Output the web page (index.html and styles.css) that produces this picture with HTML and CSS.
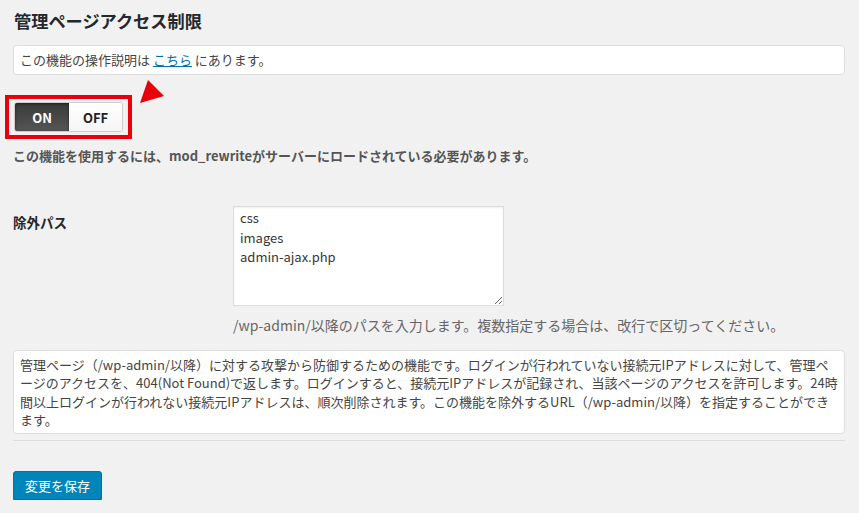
FILE: index.html
```html
<!DOCTYPE html>
<html lang="ja">
<head>
    <meta charset="UTF-8">
    <meta name="viewport" content="width=device-width, initial-scale=1.0">
    <title>管理ページアクセス制限</title>
    <link rel="stylesheet" href="styles.css">
</head>
<body>
    <div class="wrap">
        <h2 class="page-title">管理ページアクセス制限</h2>

        <div class="info-box">この機能の操作説明は <a href="#">こちら</a> にあります。</div>

        <div class="toggle-row">
            <div class="highlight">
                <div class="switch">
                    <span class="switch-on">ON</span>
                    <span class="switch-off">OFF</span>
                </div>
            </div>
            <svg class="pointer" width="26" height="25" viewBox="0 0 26 25">
                <polygon points="8,0 24,16 0,23" fill="#e8000b"/>
            </svg>
        </div>

        <p class="notice">この機能を使用するには、mod_rewriteがサーバーにロードされている必要があります。</p>

        <div class="field-row">
            <div class="field-label">除外パス</div>
            <div class="field-body">
                <textarea class="paths">css
images
admin-ajax.php</textarea>
                <p class="field-desc">/wp-admin/以降のパスを入力します。複数指定する場合は、改行で区切ってください。</p>
            </div>
        </div>

        <div class="desc-box">管理ページ（/wp-admin/以降）に対する攻撃から防御するための機能です。ログインが行われていない接続元IPアドレスに対して、管理ページのアクセスを、404(Not Found)で返します。ログインすると、接続元IPアドレスが記録され、当該ページのアクセスを許可します。24時間以上ログインが行われない接続元IPアドレスは、順次削除されます。この機能を除外するURL（/wp-admin/以降）を指定することができます。</div>

        <hr class="divider">

        <button class="save-btn">変更を保存</button>
    </div>
</body>
</html>
```

FILE: styles.css
```css
body {
    margin: 0;
    padding: 0;
    background: #f1f1f1;
    font-family: "Noto Sans CJK JP", "Noto Sans", sans-serif;
    font-size: 13px;
    color: #444;
}

.wrap {
    width: 832px;
    margin-left: 13px;
    padding-top: 9px;
}

.page-title {
    margin: 0;
    font-size: 17.2px;
    line-height: 23px;
    font-weight: bold;
    color: #23282d;
    padding-left: 1px;
}

.info-box {
    margin-top: 13px;
    background: #fff;
    border: 1px solid #ddd;
    border-radius: 4px;
    padding: 5px 6px;
    line-height: 18px;
    color: #444;
}

.info-box a {
    color: #0073aa;
    text-decoration: underline;
}

.toggle-row {
    position: relative;
    margin-top: 20px;
    height: 44px;
}

.highlight {
    display: inline-block;
    margin-left: -8px;
    border: 4px solid #e8000b;
    padding: 3px 5px;
}

.switch {
    display: flex;
    width: 107px;
    height: 28px;
    border: 1px solid #ccc;
    border-radius: 3px;
    overflow: hidden;
    font-weight: bold;
    font-size: 13px;
}

.switch-on,
.switch-off {
    display: flex;
    align-items: center;
    justify-content: center;
}

.switch-on {
    width: 54px;
    background: linear-gradient(#3a3a3a, #555);
    box-shadow: inset 0 1px 3px rgba(0, 0, 0, 0.5);
    color: #fff;
}

.switch-off {
    flex: 1;
    background: linear-gradient(#fff, #f5f5f5);
    color: #222;
}

/* annotation arrow pointing at the switch */
.pointer {
    position: absolute;
    left: 127px;
    top: -15px;
}

.notice {
    margin: 7px 0 0;
    line-height: 20px;
    font-weight: bold;
    color: #555;
}

.field-row {
    display: flex;
    margin-top: 40px;
}

.field-label {
    width: 220px;
    padding-top: 6px;
    font-weight: bold;
    font-size: 13.5px;
    color: #23282d;
}

.field-body {
    flex: 1;
}

.paths {
    display: block;
    box-sizing: border-box;
    width: 271px;
    height: 100px;
    margin: 0;
    padding: 1px 6px 0;
    border: 1px solid #ddd;
    background: #fff;
    font-family: "Noto Sans CJK JP", "Noto Sans", sans-serif;
    font-size: 13px;
    line-height: 19.5px;
    color: #32373c;
    box-shadow: inset 0 1px 2px rgba(0, 0, 0, 0.07);
    resize: both;
}

.field-desc {
    margin: 8px 0 0;
    line-height: 22px;
    font-size: 14px;
    color: #666;
}

.desc-box {
    margin-top: 14px;
    background: #fff;
    border: 1px solid #ddd;
    border-radius: 4px;
    padding: 5px 6px 4px;
    line-height: 18.3px;
    color: #444;
}

.divider {
    margin: 6px 0 0;
    border: 0;
    border-top: 1px solid #ddd;
}

.save-btn {
    display: block;
    margin-top: 30px;
    height: 29px;
    padding: 0 11px;
    background: #0085ba;
    border: 1px solid #0073aa;
    border-radius: 3px;
    box-shadow: 0 1px 0 #006799;
    color: #fff;
    font-family: "Noto Sans CJK JP", "Noto Sans", sans-serif;
    font-size: 13px;
}
```
